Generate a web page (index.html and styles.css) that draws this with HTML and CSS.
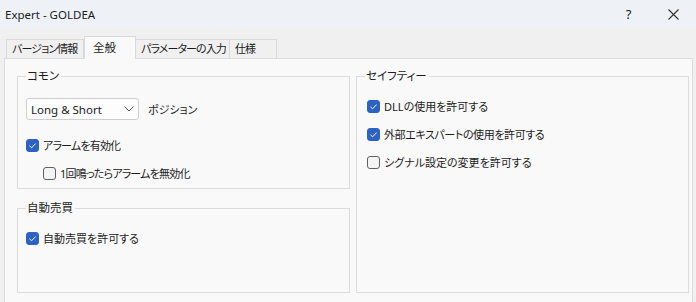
FILE: index.html
```html
<!DOCTYPE html>
<html lang="ja">
<head>
  <meta charset="UTF-8" />
  <title>Expert - GOLDEA</title>
  <link rel="stylesheet" href="styles.css">
</head>
<body>
  <header class="titlebar">
    <span class="title">Expert - GOLDEA</span>
    <div class="caption-buttons">
      <span class="caption-btn">?</span>
      <span class="caption-btn">
        <svg width="11" height="11" viewBox="0 0 11 11"><path d="M0.5 0.5 L10.5 10.5 M10.5 0.5 L0.5 10.5" stroke="#333" stroke-width="1.1" fill="none"/></svg>
      </span>
    </div>
  </header>

  <nav class="tabs">
    <span class="tab tab-info">バージョン情報</span>
    <span class="tab tab-general active">全般</span>
    <span class="tab tab-params">パラメーターの入力</span>
    <span class="tab tab-spec">仕様</span>
  </nav>

  <main class="panel">
    <div class="columns">
      <div class="col-left">
        <fieldset class="group">
          <legend>コモン</legend>
          <div class="position-row">
            <div class="combo">
              <span>Long &amp; Short</span>
              <svg width="10" height="6" viewBox="0 0 10 6"><path d="M0.5 0.5 L5 5 L9.5 0.5" stroke="#555" stroke-width="1" fill="none"/></svg>
            </div>
            <span class="combo-label">ポジション</span>
          </div>
          <label class="check-row spaced">
            <span class="box checked"><svg width="13" height="13" viewBox="0 0 13 13"><path d="M3.5 6.8 L5.6 8.8 L9.6 4.6" stroke="#fff" stroke-width="1" fill="none"/></svg></span>
            <span class="tight">アラームを有効化</span>
          </label>
          <label class="check-row sub">
            <span class="box"></span>
            <span class="tight">1回鳴ったらアラームを無効化</span>
          </label>
        </fieldset>

        <fieldset class="group grow">
          <legend>自動売買</legend>
          <label class="check-row">
            <span class="box checked"><svg width="13" height="13" viewBox="0 0 13 13"><path d="M3.5 6.8 L5.6 8.8 L9.6 4.6" stroke="#fff" stroke-width="1" fill="none"/></svg></span>
            自動売買を許可する
          </label>
        </fieldset>
      </div>

      <fieldset class="group safety">
        <legend>セイフティー</legend>
        <label class="check-row">
          <span class="box checked"><svg width="13" height="13" viewBox="0 0 13 13"><path d="M3.5 6.8 L5.6 8.8 L9.6 4.6" stroke="#fff" stroke-width="1" fill="none"/></svg></span>
          DLLの使用を許可する
        </label>
        <label class="check-row">
          <span class="box checked"><svg width="13" height="13" viewBox="0 0 13 13"><path d="M3.5 6.8 L5.6 8.8 L9.6 4.6" stroke="#fff" stroke-width="1" fill="none"/></svg></span>
          <span class="tight-s">外部エキスパートの使用を許可する</span>
        </label>
        <label class="check-row">
          <span class="box"></span>
          シグナル設定の変更を許可する
        </label>
      </fieldset>
    </div>
  </main>
</body>
</html>
```

FILE: styles.css
```css
body {
  margin: 0;
  overflow: hidden;
  font-family: "Noto Sans", "Noto Sans CJK JP", sans-serif;
  font-size: 11px;
  font-feature-settings: "palt";
  background-color: #f0f0f0;
  color: #1b1b1b;
}

.titlebar {
  height: 28px;
  display: flex;
  align-items: center;
  justify-content: space-between;
  padding-left: 5px;
  background-color: #eef2f7;
}

.title {
  font-size: 11.5px;
}

.caption-buttons {
  display: flex;
  height: 100%;
}

.caption-btn {
  width: 45px;
  display: flex;
  align-items: center;
  justify-content: center;
  font-size: 13px;
}

.tabs {
  display: flex;
  align-items: flex-end;
  height: 22px;
  margin-top: 8px;
  padding-left: 6px;
  white-space: nowrap;
}

.tab {
  height: 19px;
  line-height: 18px;
  box-sizing: border-box;
  padding-left: 5px;
  font-size: 11px;
  letter-spacing: -0.9px;
  border: 1px solid #d9d9d9;
  border-bottom: none;
  background-color: #f0f0f0;
}

.tab.active {
  position: relative;
  height: 23px;
  line-height: 21px;
  margin-bottom: -1px;
  padding-left: 8px;
  font-size: 11.5px;
  letter-spacing: 0;
  background-color: #f9f9f9;
}

.tab-info { width: 78px; }
.tab-general { width: 52px; }
.tab-params { width: 94px; border-left: none; }
.tab-spec { width: 47px; border-left: none; }

.panel {
  height: 260px;
  margin: 0 3px 0 4px;
  padding: 9px 3px 0 12px;
  box-sizing: border-box;
  border: 1px solid #dcdcdc;
  background-color: #f9f9f9;
}

.columns {
  display: grid;
  grid-template-columns: 333px 333px;
  column-gap: 6px;
  height: 225px;
}

.col-left {
  display: flex;
  flex-direction: column;
  gap: 11px;
}

.group {
  margin: 0;
  min-width: 0;
  padding: 14px 8px 7px 8px;
  border: 1px solid #dcdcdc;
}

.group.grow {
  flex: 1;
}

.group.safety {
  padding-left: 10px;
}

.group legend {
  padding: 0 2px 0 1px;
  line-height: 16px;
  font-size: 11.5px;
}

.safety legend {
  margin-left: -2px;
}

.position-row {
  display: flex;
  align-items: center;
  gap: 9px;
}

.combo {
  width: 113px;
  height: 22px;
  box-sizing: border-box;
  display: flex;
  align-items: center;
  justify-content: space-between;
  padding: 0 4px 0 4px;
  border: 1px solid #cfcfcf;
  border-radius: 3px;
  background-color: #fdfdfd;
  font-size: 11.5px;
}

.check-row {
  display: flex;
  align-items: center;
  height: 16px;
  margin-top: 12px;
  white-space: nowrap;
}

.check-row:first-of-type {
  margin-top: 0;
}

.check-row.spaced {
  margin-top: 17px;
}

.check-row.sub {
  padding-left: 17px;
}

.tight {
  letter-spacing: -0.8px;
}

.tight-s {
  letter-spacing: -0.4px;
}

.box {
  width: 13px;
  height: 13px;
  box-sizing: border-box;
  margin-right: 4px;
  border: 1px solid #616161;
  border-radius: 3px;
  background-color: #f4f4f4;
  display: flex;
}

.box.checked {
  border-color: #2c62c3;
  background-color: #2c62c3;
}

.box svg {
  margin: -1px;
}
```
